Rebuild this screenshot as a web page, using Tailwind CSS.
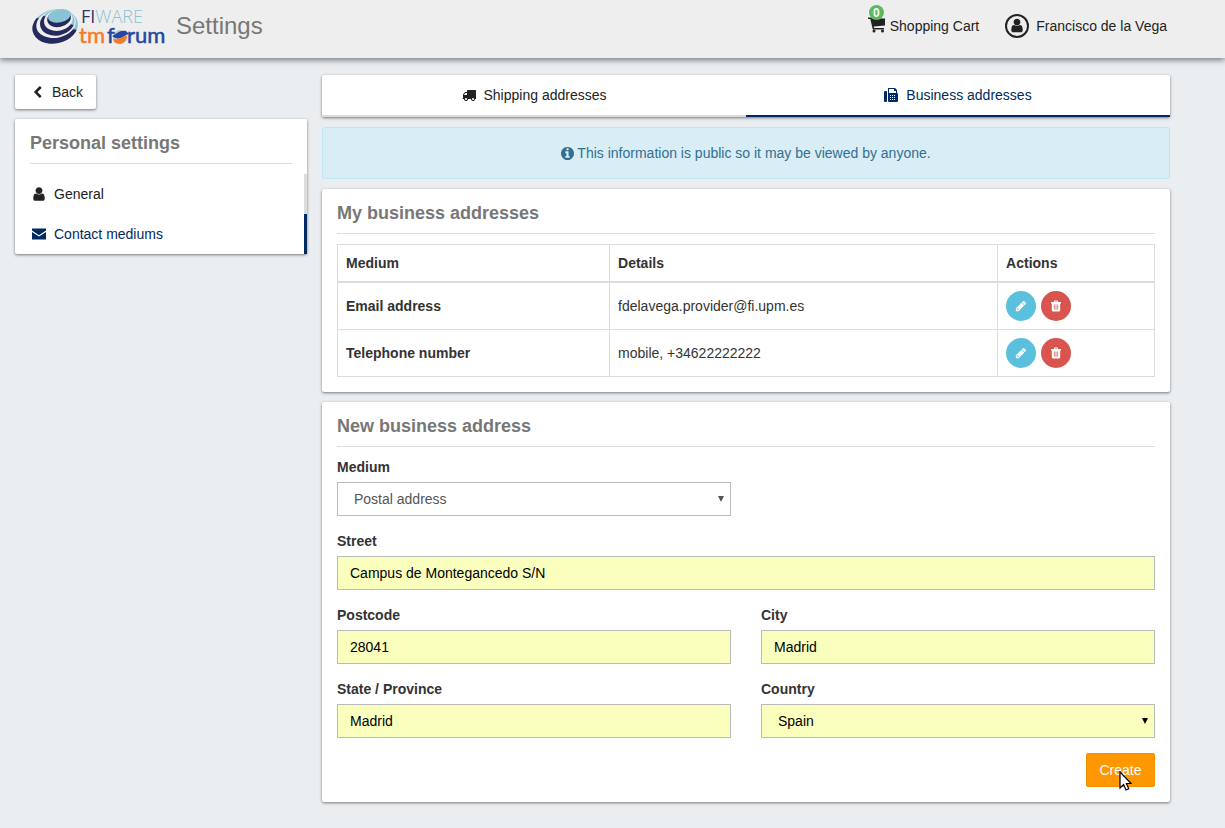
<!DOCTYPE html>
<html lang="en">
<head>
<meta charset="utf-8">
<meta name="viewport" content="width=device-width, initial-scale=1">
<title>Settings</title>
<script src="https://cdn.jsdelivr.net/npm/@tailwindcss/browser@4"></script>
</head>
<body class="min-h-screen bg-[#eaeef1] font-['Liberation_Sans',Arial,sans-serif] text-sm leading-5 text-[#333]">

<svg class="hidden" aria-hidden="true">
  <symbol id="user" viewBox="0 0 1792 1792"><path d="M1536 1399q0 109-62.5 187t-150.5 78h-854q-88 0-150.5-78t-62.5-187q0-85 8.5-160.5t31.5-152 58.5-131 94-89 134.5-34.5q131 128 313 128t313-128q76 0 134.5 34.5t94 89 58.5 131 31.5 152 8.5 160.5zm-256-887q0 159-112.5 271.5t-271.5 112.5-271.5-112.5-112.5-271.5 112.5-271.5 271.5-112.5 271.5 112.5 112.5 271.5z"/></symbol>
  <symbol id="pencil" viewBox="0 0 1792 1792"><path d="M491 1536l91-91-235-235-91 91v107h128v128h107zM960 416l416 416-832 832h-416v-416zm683 96q0 53-37 90l-166 166-416-416 166-165q36-38 90-38 53 0 91 38l235 234q37 39 37 91z"/></symbol>
  <symbol id="trash" viewBox="0 0 12 12"><path d="M4 2V1.200Q4 .5 4.700 .5H7.300Q8 .5 8 1.200V2H11V3.500H10.200V10Q10.200 11.500 8.900 11.500H3.100Q1.800 11.500 1.800 10V3.500H1V2ZM5 2H7V1.400H5Z" fill-rule="evenodd"/><path d="M4.400 4.500V9.700M6 4.500V9.700M7.600 4.500V9.700" stroke="#d9534f" stroke-width="0.700"/></symbol>
</svg>

<header class="relative flex h-[58px] items-start justify-between bg-[#eee] pl-8 pr-[58px] shadow-[0_2px_6px_rgba(0,0,0,0.5)]">
  <div class="flex items-start gap-2">
    <svg class="mt-1 h-[46px] w-[136px]" viewBox="0 0 136 46" role="img" aria-label="FIWARE TM Forum">
      <defs>
        <linearGradient id="ring" x1="0.200" y1="0.900" x2="0.800" y2="0.100">
          <stop offset="0.560" stop-color="#252a5c"/><stop offset="0.600" stop-color="#89c3d5"/>
        </linearGradient>
      </defs>
      <g transform="rotate(-12 23 22)">
        <ellipse cx="23" cy="22.500" rx="23" ry="17" fill="url(#ring)"/>
        <ellipse cx="24.500" cy="20" rx="20" ry="14" fill="#eee"/>
        <ellipse cx="26" cy="19" rx="17.500" ry="13" fill="url(#ring)"/>
        <ellipse cx="27.500" cy="17" rx="14.500" ry="10.500" fill="#eee"/>
        <ellipse cx="28.500" cy="15.500" rx="12" ry="8.500" fill="#252a5c"/>
        <ellipse cx="29.500" cy="13" rx="11.500" ry="6.500" fill="#89c3d5"/>
      </g>
      <text x="49" y="19" font-family="Open Sans, sans-serif" font-size="18"><tspan fill="#343466">FI</tspan><tspan fill="#89c3d5" font-weight="300">WARE</tspan></text>
      <circle cx="88" cy="33" r="7" fill="#c4c5c9"/>
      <text y="39" font-family="Lato, sans-serif" font-size="22" stroke-width="0.500"><tspan x="47" fill="#f57c24" stroke="#f57c24">tm</tspan><tspan x="75" fill="#2348a0" stroke="#2348a0">f</tspan><tspan x="95" fill="#2348a0" stroke="#2348a0">rum</tspan></text>
      <path d="M80 32C85 30 87 26 94 27L97 30C92 31 90 36 83 34Z" fill="#2348a0"/>
      <path d="M81 35C87 37 89 32 95 32C95 39 87 42 82 38Z" fill="#f57c24"/>
    </svg>
    <h1 class="mt-2 text-2xl leading-9 text-[#777]">Settings</h1>
  </div>
  <nav class="flex pt-[11px] text-[#222]">
    <a href="#" class="relative flex h-[30px] items-center gap-1">
      <svg class="h-[18px] w-[18px]" viewBox="0 0 18 18" fill="currentColor"><path d="M0 0.500H3.300L4 1.500H17V8.500L5.800 9.500L6.200 11H16V12.500H4.800L2.300 2H0Z"/><circle cx="6" cy="14" r="1.500"/><circle cx="14.500" cy="14" r="1.500"/></svg>
      <span>Shopping Cart</span>
      <span class="absolute -top-[6px] left-[1px] flex h-[15px] w-[15px] items-center justify-center rounded-full bg-[#5cb85c] text-xs font-bold text-white">0</span>
    </a>
    <a href="#" class="ml-[25px] flex h-[30px] items-center gap-[6px]">
      <svg class="h-[26px] w-[26px]" viewBox="0 0 26 26"><circle cx="13" cy="13" r="11" fill="none" stroke="#222" stroke-width="2"/><use href="#user" x="5" y="4.500" width="16" height="16" fill="#222"/></svg>
      <span>Francisco de la Vega</span>
    </a>
  </nav>
</header>

<div class="ml-[15px] mr-10 flex items-start pt-[17px]">
  <aside class="w-[292px] shrink-0">
    <button type="button" class="flex h-[34px] items-center gap-2 rounded-xs bg-white pl-4 pr-[13px] text-[#222] shadow-[0_1px_3px_rgba(0,0,0,0.5)]">
      <svg class="h-[13px] w-[13px]" viewBox="0 0 1792 1792" fill="currentColor"><path d="M1427 301l-531 531 531 531q19 19 19 45t-19 45l-166 166q-19 19-45 19t-45-19l-742-742q-19-19-19-45t19-45l742-742q19-19 45-19t45 19l166 166q19 19 19 45t-19 45z"/></svg>
      Back
    </button>
    <section class="mt-[10px] rounded-xs bg-white shadow-[0_1px_3px_rgba(0,0,0,0.5)]">
      <h2 class="mx-[15px] border-b border-[#ddd] pt-3 pb-2 text-lg leading-6 font-bold text-[#777]">Personal settings</h2>
      <nav class="pt-[10px]">
        <a href="#" class="flex h-10 items-center gap-[7px] border-r-[3px] border-[#ddd] pl-4 text-[#222]">
          <svg class="size-4" fill="currentColor"><use href="#user"/></svg>General</a>
        <a href="#" class="flex h-10 items-center gap-[7px] border-r-[3px] border-[#002b62] pl-4 text-[#002b62]">
          <svg class="size-4" viewBox="-1 -1 16 16"><path fill="currentColor" d="M0 1.500H14V3.500L7 8.200L0 3.500ZM0 5L7 9.600L14 5V12.500H0Z"/></svg>Contact mediums</a>
      </nav>
    </section>
  </aside>

  <main class="flex flex-1 flex-col gap-[10px] px-[15px] pb-6">
    <nav class="flex rounded-xs bg-white shadow-[0_1px_3px_rgba(0,0,0,0.5)]">
      <a href="#" class="flex h-[42px] flex-1 items-center justify-center gap-2 border-b-2 border-[#ddd] text-[#222]">
        <svg class="h-[14px] w-[14px]" viewBox="0 0 1792 1792" fill="currentColor"><path d="M640 1408q0-52-38-90t-90-38-90 38-38 90 38 90 90 38 90-38 38-90zm-384-512h384v-256h-158q-13 0-22 9l-195 195q-9 9-9 22v30zm1280 512q0-52-38-90t-90-38-90 38-38 90 38 90 90 38 90-38 38-90zm256-1088v1024q0 15-4 26.500t-13.500 18.500-16.500 11.500-23.500 6-22.500 2-25.500 0-22.500-.5q0 106-75 181t-181 75-181-75-75-181h-384q0 106-75 181t-181 75-181-75-75-181h-64q-3 0-22.500.5t-25.500 0-22.500-2-23.500-6-16.500-11.500-13.500-18.500-4-26.500q0-26 19-45t45-19v-320q0-8-.5-35t0-38 2.500-34.500 6.500-37 14-30.500 22.500-30l198-198q19-19 50.500-32t58.500-13h160v-192q0-26 19-45t45-19h1024q26 0 45 19t19 45z"/></svg>
        Shipping addresses</a>
      <a href="#" class="flex h-[42px] flex-1 items-center justify-center gap-2 border-b-2 border-[#002b62] text-[#002b62]">
        <svg class="h-[14px] w-[14px]" viewBox="0 0 14 14" fill="currentColor"><rect y="3" width="3" height="11" rx="1"/><path fill-rule="evenodd" d="M4 0H11L13 2V5Q14 5 14 6V13Q14 14 13 14H5Q4 14 4 13ZM5 1V5H12V3H10V1ZM6 7V8H7V7ZM8 7V8H9V7ZM10 7V8H11V7ZM6 9V10H7V9ZM8 9V10H9V9ZM10 9V10H11V9ZM6 11V12H7V11ZM8 11V12H9V11ZM10 11V12H11V11Z"/></svg>
        Business addresses</a>
    </nav>

    <div role="status" class="flex h-[52px] items-center justify-center gap-[3px] rounded-xs border border-[#bce8f1] bg-[#d9edf7] text-[#31708f]">
      <svg class="h-[13px] w-[13px]" viewBox="128 128 1536 1536" fill="currentColor"><path d="M1152 1376v-160q0-14-9-23t-23-9h-96v-512q0-14-9-23t-23-9h-320q-14 0-23 9t-9 23v160q0 14 9 23t23 9h96v320h-96q-14 0-23 9t-9 23v160q0 14 9 23t23 9h448q14 0 23-9t9-23zm-128-896v-160q0-14-9-23t-23-9h-192q-14 0-23 9t-9 23v160q0 14 9 23t23 9h192q14 0 23-9t9-23zm640 416q0 209-103 385.500t-279.500 279.500-385.500 103-385.500-103-279.500-279.500-103-385.500 103-385.500 279.500-279.500 385.500-103 385.500 103 279.500 279.500 103 385.500z"/></svg>
      This information is public so it may be viewed by anyone.
    </div>

    <section class="rounded-xs bg-white px-[15px] pb-[15px] shadow-[0_1px_3px_rgba(0,0,0,0.5)]">
      <h2 class="mb-[10px] border-b border-[#ddd] pt-3 pb-2 text-lg leading-6 font-bold text-[#777]">My business addresses</h2>
      <table class="w-full table-fixed border-collapse text-left [&_td]:border [&_td]:border-[#ddd] [&_td]:px-2 [&_th]:border [&_th]:border-[#ddd] [&_th]:px-2">
        <colgroup><col class="w-[33.3%]"><col class="w-[47.5%]"><col class="w-[19.2%]"></colgroup>
        <thead>
          <tr class="h-[37px] border-b-2 border-[#ddd]"><th scope="col">Medium</th><th scope="col">Details</th><th scope="col">Actions</th></tr>
        </thead>
        <tbody>
          <tr class="h-12">
            <th scope="row">Email address</th>
            <td>fdelavega.provider@fi.upm.es</td>
            <td><div class="flex gap-[5px]">
              <button type="button" aria-label="Edit email address" class="flex size-[30px] items-center justify-center rounded-full bg-[#5bc0de] text-white"><svg class="size-3" fill="currentColor"><use href="#pencil"/></svg></button>
              <button type="button" aria-label="Delete email address" class="flex size-[30px] items-center justify-center rounded-full bg-[#d9534f] text-white"><svg class="size-3" fill="currentColor"><use href="#trash"/></svg></button>
            </div></td>
          </tr>
          <tr class="h-[47px]">
            <th scope="row">Telephone number</th>
            <td>mobile, +34622222222</td>
            <td><div class="flex gap-[5px]">
              <button type="button" aria-label="Edit telephone number" class="flex size-[30px] items-center justify-center rounded-full bg-[#5bc0de] text-white"><svg class="size-3" fill="currentColor"><use href="#pencil"/></svg></button>
              <button type="button" aria-label="Delete telephone number" class="flex size-[30px] items-center justify-center rounded-full bg-[#d9534f] text-white"><svg class="size-3" fill="currentColor"><use href="#trash"/></svg></button>
            </div></td>
          </tr>
        </tbody>
      </table>
    </section>

    <section class="rounded-xs bg-white px-[15px] pb-[15px] shadow-[0_1px_3px_rgba(0,0,0,0.5)]">
      <h2 class="mb-[10px] border-b border-[#ddd] pt-3 pb-2 text-lg leading-6 font-bold text-[#777]">New business address</h2>
      <form class="grid grid-cols-2 gap-x-[30px] gap-y-[15px]">
        <div class="flex flex-col gap-[5px]">
          <label for="medium" class="font-bold">Medium</label>
          <div class="relative text-[#555]">
            <select id="medium" class="block h-[34px] w-full appearance-none border border-[#bbb] bg-white px-4"><option>Postal address</option></select>
            <svg class="pointer-events-none absolute top-[14px] right-[7px] h-[6px] w-[6px]" viewBox="0 0 6 6" fill="currentColor"><path d="M0 0H6L3 6Z"/></svg>
          </div>
        </div>
        <div class="col-span-2 flex flex-col gap-[5px]">
          <label for="street" class="font-bold">Street</label>
          <input id="street" type="text" value="Campus de Montegancedo S/N" class="h-[34px] w-full border border-[#bbb] bg-[#faffbd] px-3 text-black">
        </div>
        <div class="flex flex-col gap-[5px]">
          <label for="postcode" class="font-bold">Postcode</label>
          <input id="postcode" type="text" value="28041" class="h-[34px] w-full border border-[#bbb] bg-[#faffbd] px-3 text-black">
        </div>
        <div class="flex flex-col gap-[5px]">
          <label for="city" class="font-bold">City</label>
          <input id="city" type="text" value="Madrid" class="h-[34px] w-full border border-[#bbb] bg-[#faffbd] px-3 text-black">
        </div>
        <div class="flex flex-col gap-[5px]">
          <label for="state" class="font-bold">State / Province</label>
          <input id="state" type="text" value="Madrid" class="h-[34px] w-full border border-[#bbb] bg-[#faffbd] px-3 text-black">
        </div>
        <div class="flex flex-col gap-[5px]">
          <label for="country" class="font-bold">Country</label>
          <div class="relative text-black">
            <select id="country" class="block h-[34px] w-full appearance-none border border-[#bbb] bg-[#faffbd] px-4"><option>Spain</option></select>
            <svg class="pointer-events-none absolute top-[14px] right-[7px] h-[6px] w-[6px]" viewBox="0 0 6 6" fill="currentColor"><path d="M0 0H6L3 6Z"/></svg>
          </div>
        </div>
        <div class="relative col-span-2 flex justify-end">
          <button type="button" class="h-[34px] w-[69px] rounded-xs border border-[#f09000] bg-[#ff9800] text-white">Create</button>
          <svg class="pointer-events-none absolute top-[18px] right-[23px] h-5 w-[13px]" viewBox="0 0 13 20"><path d="M1 1V17L4.600 13.600L7 19L9.800 17.800L7.400 12.500H12.200Z" fill="#fff" stroke="#000" stroke-width="1.200"/></svg>
        </div>
      </form>
    </section>
  </main>
</div>
</body>
</html>
